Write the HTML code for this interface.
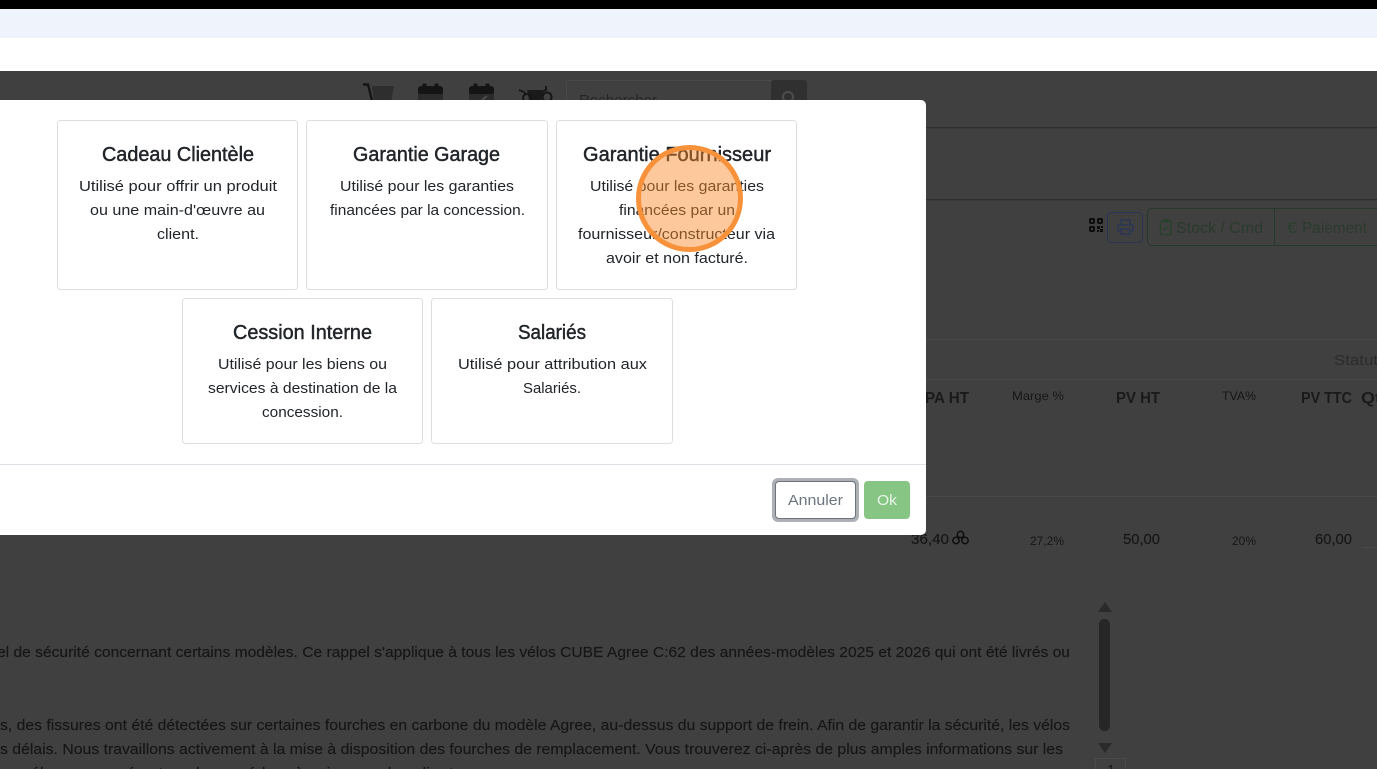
<!DOCTYPE html>
<html lang="fr">
<head>
<meta charset="utf-8">
<title>Garantie</title>
<style>
html,body{margin:0;padding:0;width:1377px;height:769px;overflow:hidden;background:#404040}
svg{display:block}
text{font-family:"Liberation Sans",sans-serif;white-space:pre}
.t{font-size:20px;font-weight:400;fill:#212529;stroke:#212529;stroke-width:.45px}
.b{font-size:15px;fill:#212529}
.d{font-size:15px;fill:#161616;stroke:#161616;stroke-width:.15px}
.h{font-size:15.5px;font-weight:700;fill:#1a1a1a}
.s{font-size:12px;fill:#161616}
</style>
</head>
<body>
<svg width="1377" height="769" viewBox="0 0 1377 769" xmlns="http://www.w3.org/2000/svg">
<rect width="1377" height="769" fill="#404040"/>
<rect width="1377" height="9" fill="#000"/>
<rect y="9" width="1377" height="29" fill="#eff3fb"/>
<rect y="38" width="1377" height="33" fill="#fff"/>

<!-- background lines -->
<rect y="127" width="1377" height="1" fill="#2e2e2e"/>
<rect y="128" width="1377" height="1" fill="#3a3a3a"/>
<rect y="199" width="1377" height="1" fill="#2e2e2e"/>
<rect y="200" width="1377" height="1" fill="#3a3a3a"/>
<rect y="339" width="1377" height="1" fill="#484848"/>
<rect y="379" width="1377" height="1" fill="#484848"/>
<rect y="496" width="1377" height="1" fill="#484848"/>

<!-- top icons -->
<path d="M363 84.500h5l4 16" fill="none" stroke="#151515" stroke-width="2.400"/>
<path d="M372 86h22l-3 16h-17z" fill="#2e2e2e"/>
<rect x="418" y="86" width="25" height="9" rx="3" fill="#141414"/>
<rect x="422.500" y="83.500" width="4" height="5" rx="1" fill="#141414"/><rect x="434.500" y="83.500" width="4" height="5" rx="1" fill="#141414"/>
<rect x="418" y="94" width="25" height="10" fill="#2b2b2b"/>
<rect x="469" y="86" width="25" height="9" rx="3" fill="#141414"/>
<rect x="473.500" y="83.500" width="4" height="5" rx="1" fill="#141414"/><rect x="485.500" y="83.500" width="4" height="5" rx="1" fill="#141414"/>
<rect x="469" y="94" width="25" height="10" fill="#2b2b2b"/>
<path d="M482 100l5-4" stroke="#4d4d4d" stroke-width="2"/>
<path d="M519 90l5 2 2 3M542 92l5-3M546 86v5" fill="none" stroke="#161616" stroke-width="1.800"/>
<path d="M527 90h15l2 5-3 5h-12z" fill="#1a1a1a"/>
<circle cx="547" cy="97" r="4.500" fill="none" stroke="#161616" stroke-width="2"/>
<circle cx="527" cy="98" r="4" fill="none" stroke="#161616" stroke-width="2"/>

<!-- search -->
<rect x="566.500" y="80.500" width="206" height="30" rx="3" fill="#404040" stroke="#4a4a4a"/>
<text x="579" y="105" font-size="15" textLength="78" lengthAdjust="spacingAndGlyphs" fill="#262626">Rechercher</text>
<rect x="771" y="80" width="36" height="30" rx="3" fill="#303030"/>
<circle cx="788" cy="97" r="5" fill="none" stroke="#4d4d4d" stroke-width="2"/>

<!-- toolbar right -->
<g fill="none" stroke="#0d0d0d" stroke-width="2">
<rect x="1090" y="219" width="4" height="4" rx="1"/>
<rect x="1098" y="219" width="4" height="4" rx="1"/>
<rect x="1090" y="227" width="4" height="4" rx="1"/>
</g>
<g fill="#0d0d0d">
<rect x="1097" y="226" width="3" height="3"/><rect x="1101" y="226" width="2" height="2"/><rect x="1097" y="230" width="2" height="2"/><rect x="1100" y="229" width="3" height="3"/>
</g>
<rect x="1107.500" y="212.500" width="35" height="30" rx="4" fill="none" stroke="#2b3452"/>
<path d="M1121 225v-5h9v5M1121 231h-3v-6h15v6h-3M1121 229h9v5h-9z" fill="none" stroke="#2b3452" stroke-width="1.500"/>
<rect x="1147.500" y="208.500" width="240" height="37" rx="4" fill="none" stroke="#26392a"/>
<rect x="1274" y="208" width="1" height="38" fill="#26392a"/>
<rect x="1160.500" y="221" width="10.500" height="13.500" rx="1" fill="none" stroke="#29402c" stroke-width="1.500"/>
<rect x="1163" y="219" width="5.500" height="3.500" fill="#29402c"/>
<path d="M1163 228l2 2 3.500-4" fill="none" stroke="#29402c" stroke-width="1.200"/>
<text x="1176" y="233" font-size="16" fill="#2a3a2c" textLength="87" lengthAdjust="spacingAndGlyphs">Stock / Cmd</text>
<text x="1287" y="233" font-size="16" fill="#29402c" textLength="10" lengthAdjust="spacingAndGlyphs">€</text>
<text x="1302" y="233" font-size="16" fill="#2a3a2c" textLength="65" lengthAdjust="spacingAndGlyphs">Paiement</text>

<!-- table -->
<text x="1334" y="365" font-size="15" fill="#2b2b2b" textLength="44" lengthAdjust="spacingAndGlyphs">Statut</text>
<text x="925" y="403" class="h" textLength="44" lengthAdjust="spacingAndGlyphs">PA HT</text>
<text x="1012" y="400" class="s" textLength="52" lengthAdjust="spacingAndGlyphs">Marge %</text>
<text x="1116" y="403" class="h" textLength="44" lengthAdjust="spacingAndGlyphs">PV HT</text>
<text x="1222" y="400" class="s" textLength="34" lengthAdjust="spacingAndGlyphs">TVA%</text>
<text x="1301" y="403" class="h" textLength="51" lengthAdjust="spacingAndGlyphs">PV TTC</text>
<text x="1361" y="403" class="h" textLength="30" lengthAdjust="spacingAndGlyphs">Qté</text>

<text x="911" y="544" class="d" textLength="38" lengthAdjust="spacingAndGlyphs">36,40</text>
<g fill="none" stroke="#0d0d0d" stroke-width="1.500">
<circle cx="960.500" cy="534.500" r="3.200"/><circle cx="956" cy="540.500" r="3.200"/><circle cx="965" cy="540.500" r="3.200"/>
</g>
<text x="1030" y="545" class="s" textLength="34" lengthAdjust="spacingAndGlyphs">27,2%</text>
<text x="1123" y="544" class="d" textLength="37" lengthAdjust="spacingAndGlyphs">50,00</text>
<text x="1232" y="545" class="s" textLength="24" lengthAdjust="spacingAndGlyphs">20%</text>
<text x="1315" y="544" class="d" textLength="37" lengthAdjust="spacingAndGlyphs">60,00</text>
<rect x="1362" y="547" width="15" height="1" fill="#4a4a4a"/>

<!-- paragraph -->
<text x="-3" y="657" class="d" textLength="1073" lengthAdjust="spacingAndGlyphs">el de sécurité concernant certains modèles. Ce rappel s'applique à tous les vélos CUBE Agree C:62 des années-modèles 2025 et 2026 qui ont été livrés ou</text>
<text x="0" y="730" class="d" textLength="1070" lengthAdjust="spacingAndGlyphs">s, des fissures ont été détectées sur certaines fourches en carbone du modèle Agree, au-dessus du support de frein. Afin de garantir la sécurité, les vélos</text>
<text x="0" y="754" class="d" textLength="1063" lengthAdjust="spacingAndGlyphs">s délais. Nous travaillons activement à la mise à disposition des fourches de remplacement. Vous trouverez ci-après de plus amples informations sur les</text>
<text x="22" y="778" class="d" textLength="440" lengthAdjust="spacingAndGlyphs">vélos concernés et sur la procédure à suivre par les clients</text>

<!-- scrollbar -->
<path d="M1105 602l7 10h-14z" fill="#2a2a2a"/>
<rect x="1099" y="619" width="11" height="112" rx="5.500" fill="#262626"/>
<path d="M1098 743h14l-7 10z" fill="#2a2a2a"/>
<rect x="1095.500" y="758.500" width="30" height="20" fill="none" stroke="#4a4a4a"/>
<text x="1107" y="775" font-size="15" fill="#1a1a1a">1</text>

<!-- modal -->
<path d="M-10 100H921a5 5 0 0 1 5 5V530a5 5 0 0 1-5 5H-10z" fill="#fff"/>
<rect x="-5" y="464" width="931" height="1" fill="#dee2e6"/>

<g fill="#fff" stroke="#dcdfe2">
<rect x="57.500" y="120.500" width="240" height="169" rx="3"/>
<rect x="306.500" y="120.500" width="241" height="169" rx="3"/>
<rect x="556.500" y="120.500" width="240" height="169" rx="3"/>
<rect x="182.500" y="298.500" width="240" height="145" rx="3"/>
<rect x="431.500" y="298.500" width="241" height="145" rx="3"/>
</g>

<text x="102" y="161" class="t" textLength="152" lengthAdjust="spacingAndGlyphs">Cadeau Clientèle</text>
<text x="79" y="191" class="b" textLength="198" lengthAdjust="spacingAndGlyphs">Utilisé pour offrir un produit</text>
<text x="90" y="215" class="b" textLength="175" lengthAdjust="spacingAndGlyphs">ou une main-d'œuvre au</text>
<text x="157" y="239" class="b" textLength="42" lengthAdjust="spacingAndGlyphs">client.</text>

<text x="353" y="161" class="t" textLength="147" lengthAdjust="spacingAndGlyphs">Garantie Garage</text>
<text x="340" y="191" class="b" textLength="174" lengthAdjust="spacingAndGlyphs">Utilisé pour les garanties</text>
<text x="330" y="215" class="b" textLength="195" lengthAdjust="spacingAndGlyphs">financées par la concession.</text>

<text x="583" y="161" class="t" textLength="188" lengthAdjust="spacingAndGlyphs">Garantie Fournisseur</text>
<text x="590" y="191" class="b" textLength="174" lengthAdjust="spacingAndGlyphs">Utilisé pour les garanties</text>
<text x="619" y="215" class="b" textLength="116" lengthAdjust="spacingAndGlyphs">financées par un</text>
<text x="578" y="239" class="b" textLength="197" lengthAdjust="spacingAndGlyphs">fournisseur/constructeur via</text>
<text x="606" y="263" class="b" textLength="142" lengthAdjust="spacingAndGlyphs">avoir et non facturé.</text>

<text x="233" y="339" class="t" textLength="139" lengthAdjust="spacingAndGlyphs">Cession Interne</text>
<text x="218" y="369" class="b" textLength="169" lengthAdjust="spacingAndGlyphs">Utilisé pour les biens ou</text>
<text x="208" y="393" class="b" textLength="189" lengthAdjust="spacingAndGlyphs">services à destination de la</text>
<text x="262" y="417" class="b" textLength="81" lengthAdjust="spacingAndGlyphs">concession.</text>

<text x="518" y="339" class="t" textLength="68" lengthAdjust="spacingAndGlyphs">Salariés</text>
<text x="458" y="369" class="b" textLength="189" lengthAdjust="spacingAndGlyphs">Utilisé pour attribution aux</text>
<text x="523" y="393" class="b" textLength="58" lengthAdjust="spacingAndGlyphs">Salariés.</text>

<!-- buttons -->
<rect x="772" y="478" width="87" height="44" rx="6" fill="#adb0b5"/>
<rect x="775.500" y="481.500" width="80" height="37" rx="3.500" fill="#fff" stroke="#6c757d"/>
<text x="788" y="505" font-size="15" fill="#6c757d" textLength="55" lengthAdjust="spacingAndGlyphs">Annuler</text>
<rect x="864" y="481" width="46" height="38" rx="4" fill="#86c583"/>
<text x="877" y="505" font-size="15" fill="#e8f5e7" textLength="20" lengthAdjust="spacingAndGlyphs">Ok</text>

<!-- highlight circle -->
<circle cx="689.500" cy="198.500" r="51" fill="#fa8a28" fill-opacity=".46" stroke="#f7923b" stroke-width="5"/>
</svg>
</body>
</html>
